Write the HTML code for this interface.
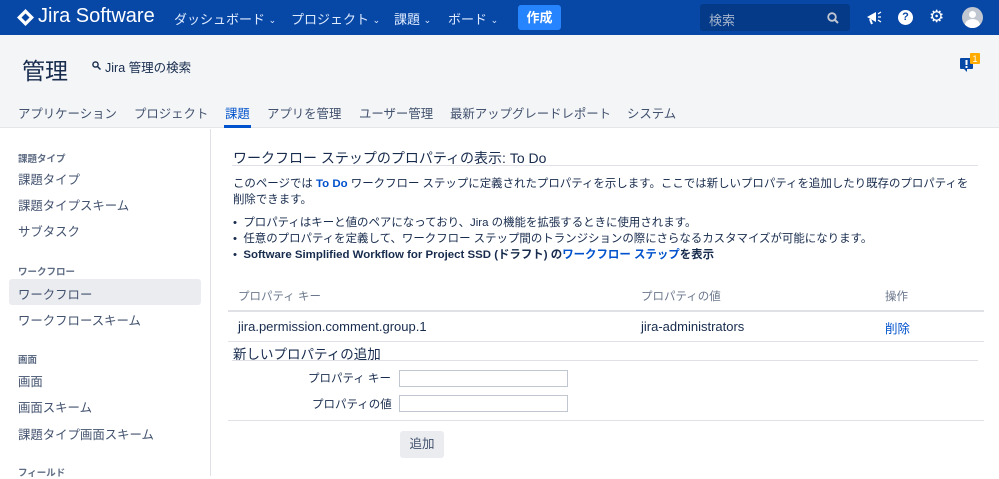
<!DOCTYPE html>
<html><head><meta charset="utf-8"><style>
*{margin:0;padding:0;box-sizing:border-box}
body{width:999px;height:476px;overflow:hidden;background:#fff;font-family:"Liberation Sans","Noto Sans CJK JP",sans-serif;color:#172b4d;position:relative;font-size:13px}
.a{position:absolute;white-space:nowrap}
#top{position:absolute;left:0;top:0;width:999px;height:35px;background:#0747a6;color:#deebff}
#top .n{font-size:13px;top:9px;color:#deebff}
#hdr{position:absolute;left:0;top:35px;width:999px;height:93px;background:#f4f5f7;border-bottom:1px solid #e4e6ea}
.tab{font-size:12.4px;top:104px;color:#42526e}
.sb{font-size:12.4px;color:#42526e;left:18px}
.sh{font-size:9.5px;color:#5e6c84;left:18px;font-weight:bold}
.blue{color:#0052cc}
.chev{font-size:9px;vertical-align:1px}
</style></head><body>
<div id="top">
 <svg class="a" style="left:17px;top:9px" width="17" height="17" viewBox="0 0 17 17"><path d="M8.5 0L17 8.5 8.5 17 0 8.5z" fill="#fff"/><path d="M8.5 4.5L12.5 8.5 8.5 12.5 4.5 8.5z" fill="#0747a6"/></svg>
 <div class="a" style="left:38px;top:5px;font-size:20px;color:#fff">Jira Software</div>
 <div class="a n" style="left:174px">ダッシュボード <span class="chev">⌄</span></div>
 <div class="a n" style="left:291px">プロジェクト <span class="chev">⌄</span></div>
 <div class="a n" style="left:394px">課題 <span class="chev">⌄</span></div>
 <div class="a n" style="left:448px">ボード <span class="chev">⌄</span></div>
 <div class="a" style="left:518px;top:5px;width:43px;height:25px;background:#2684ff;border-radius:3px;color:#fff;font-size:13px;font-weight:bold;text-align:center;line-height:25px">作成</div>
 <div class="a" style="left:700px;top:4px;width:150px;height:27px;background:#053a88;border-radius:3px"></div>
 <div class="a" style="left:709px;top:10px;font-size:13px;color:#a5b4cc">検索</div>
 <svg class="a" style="left:827px;top:12px" width="12" height="12"><circle cx="5" cy="5" r="3.8" fill="none" stroke="#c1c7d0" stroke-width="1.8"/><path d="M8 8l3 3" stroke="#c1c7d0" stroke-width="2"/></svg>
 <svg class="a" style="left:866px;top:10px" width="16" height="15"><path d="M1 7l9-5v10z" fill="#fff"/><path d="M4 9l2 5" stroke="#fff" stroke-width="2"/><path d="M12 4l3-2M12 7h3M12 10l3 2" stroke="#fff" stroke-width="1.3"/></svg>
 <div class="a" style="left:898px;top:10px;width:15px;height:15px;border-radius:50%;background:#fff;color:#0747a6;font-size:11px;font-weight:bold;text-align:center;line-height:15px">?</div>
 <div class="a" style="left:929px;top:7px;font-size:17px;color:#fff">⚙</div>
 <div class="a" style="left:962px;top:7px;width:21px;height:21px;border-radius:50%;background:#c1c7d0;overflow:hidden"><div style="position:absolute;left:7px;top:4px;width:7px;height:7px;border-radius:50%;background:#fff"></div><div style="position:absolute;left:3px;top:12px;width:15px;height:12px;border-radius:50%;background:#fff"></div></div>
</div>
<div id="hdr"></div>
<div class="a" style="left:22px;top:52px;font-size:23px;color:#172b4d">管理</div>
<svg class="a" style="left:92px;top:61px" width="9" height="9"><circle cx="3.5" cy="3.5" r="2.6" fill="none" stroke="#172b4d" stroke-width="1.4"/><path d="M5.5 5.5l3 3" stroke="#172b4d" stroke-width="1.5"/></svg>
<div class="a" style="left:105px;top:57px;font-size:12.5px">Jira 管理の検索</div>
<svg class="a" style="left:960px;top:53px" width="20" height="20"><rect x="0" y="5" width="13" height="11" rx="1" fill="#0747a6"/><path d="M4 16l3 3v-3z" fill="#0747a6"/><rect x="5.5" y="7" width="2" height="5" fill="#fff"/><rect x="5.5" y="13" width="2" height="2" fill="#fff"/><rect x="10" y="0" width="10" height="11" rx="1" fill="#ffab00"/><text x="15" y="9" font-size="9" fill="#fff" text-anchor="middle" font-family="Liberation Sans">1</text></svg>
<div class="a tab" style="left:18px">アプリケーション</div>
<div class="a tab" style="left:134px">プロジェクト</div>
<div class="a tab" style="left:225px;color:#0052cc">課題</div>
<div class="a" style="left:224px;top:125px;width:27px;height:3px;background:#0052cc"></div>
<div class="a tab" style="left:267px">アプリを管理</div>
<div class="a tab" style="left:359px">ユーザー管理</div>
<div class="a tab" style="left:450px">最新アップグレードレポート</div>
<div class="a tab" style="left:627px">システム</div>

<div class="a" style="left:210px;top:129px;width:1px;height:347px;background:#dfe1e6"></div>
<div class="a sh" style="top:151px">課題タイプ</div>
<div class="a sb" style="top:170px">課題タイプ</div>
<div class="a sb" style="top:196px">課題タイプスキーム</div>
<div class="a sb" style="top:222px">サブタスク</div>
<div class="a sh" style="top:264px">ワークフロー</div>
<div class="a" style="left:9px;top:279px;width:192px;height:26px;background:#ebecf0;border-radius:3px"></div>
<div class="a sb" style="top:285px">ワークフロー</div>
<div class="a sb" style="top:311px">ワークフロースキーム</div>
<div class="a sh" style="top:352px">画面</div>
<div class="a sb" style="top:372px">画面</div>
<div class="a sb" style="top:398px">画面スキーム</div>
<div class="a sb" style="top:425px">課題タイプ画面スキーム</div>
<div class="a sh" style="top:465px">フィールド</div>

<div class="a" style="left:233px;top:148px;font-size:14px">ワークフロー ステップのプロパティの表示: To Do</div>
<div class="a" style="left:232px;top:165px;width:746px;height:1px;background:#dfe1e6"></div>
<div class="a" style="left:233px;top:176px;font-size:11.45px;line-height:16px">このページでは <b class="blue">To Do</b> ワークフロー ステップに定義されたプロパティを示します。ここでは新しいプロパティを追加したり既存のプロパティを<br>削除できます。</div>
<div class="a" style="left:233px;top:215px;font-size:11.45px;line-height:16px">•&nbsp; プロパティはキーと値のペアになっており、Jira の機能を拡張するときに使用されます。<br>•&nbsp; 任意のプロパティを定義して、ワークフロー ステップ間のトランジションの際にさらなるカスタマイズが可能になります。<br>•&nbsp; <b>Software Simplified Workflow for Project SSD (ドラフト) の<span class="blue">ワークフロー ステップ</span>を表示</b></div>
<div class="a" style="left:238px;top:288px;font-size:11.5px;color:#6b778c">プロパティ キー</div>
<div class="a" style="left:641px;top:288px;font-size:11.5px;color:#6b778c">プロパティの値</div>
<div class="a" style="left:885px;top:288px;font-size:11.5px;color:#6b778c">操作</div>
<div class="a" style="left:228px;top:310px;width:756px;height:2px;background:#dfe1e6"></div>
<div class="a" style="left:238px;top:319px;font-size:13px">jira.permission.comment.group.1</div>
<div class="a" style="left:641px;top:319px;font-size:13px">jira-administrators</div>
<div class="a blue" style="left:885px;top:318px;font-size:12.5px">削除</div>
<div class="a" style="left:228px;top:341px;width:756px;height:1px;background:#dfe1e6"></div>
<div class="a" style="left:233px;top:343px;font-size:13.5px">新しいプロパティの追加</div>
<div class="a" style="left:232px;top:360px;width:746px;height:1px;background:#dfe1e6"></div>
<div class="a" style="left:308px;top:370px;font-size:11.5px">プロパティ キー</div>
<div class="a" style="left:399px;top:370px;width:169px;height:17px;border:1px solid #c1c7d0"></div>
<div class="a" style="left:312px;top:396px;font-size:11.5px">プロパティの値</div>
<div class="a" style="left:399px;top:395px;width:169px;height:17px;border:1px solid #c1c7d0"></div>
<div class="a" style="left:228px;top:420px;width:756px;height:1px;background:#dfe1e6"></div>
<div class="a" style="left:400px;top:431px;width:44px;height:27px;background:#ebecf0;border-radius:3px;font-size:12.5px;color:#42526e;text-align:center;line-height:27px">追加</div>
</body></html>
